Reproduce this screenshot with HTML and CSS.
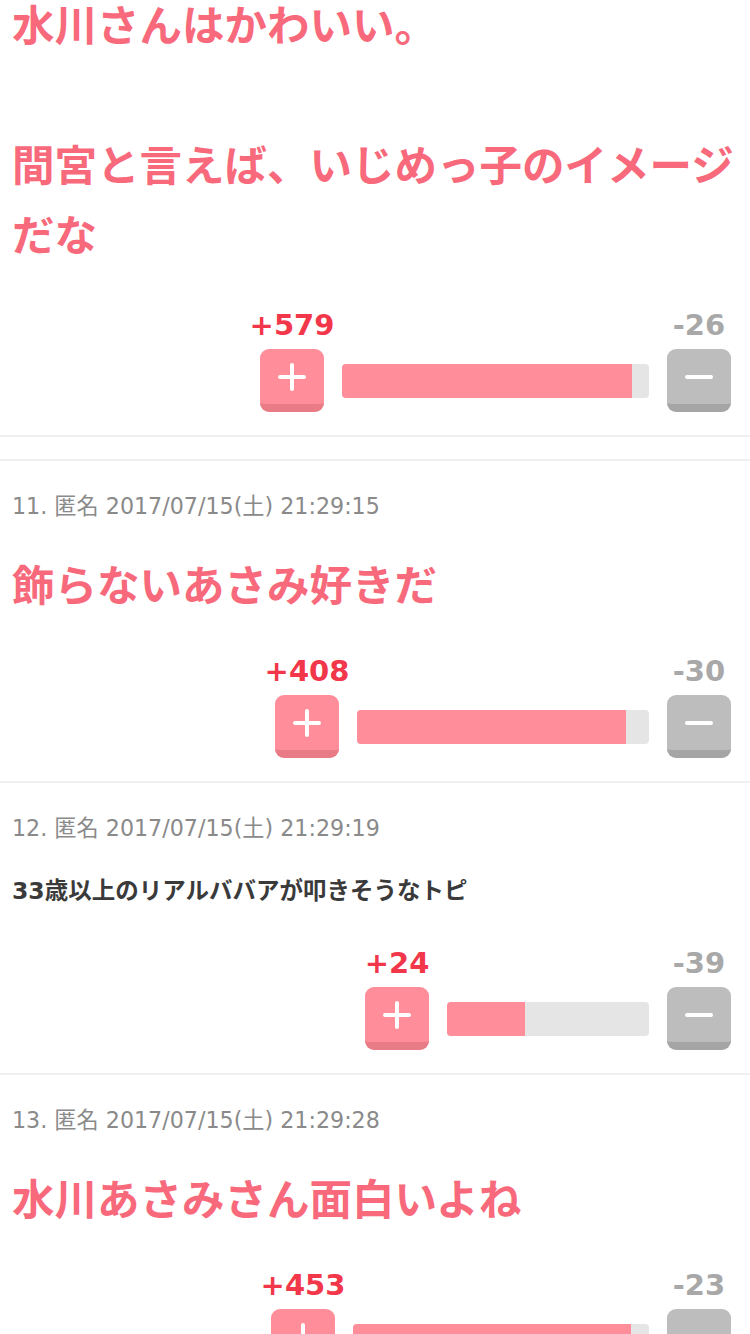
FILE: index.html
```html
<!DOCTYPE html>
<html lang="ja">
<head>
<meta charset="utf-8">
<title>comments</title>
<link rel="stylesheet" href="styles.css">
</head>
<body>
<div class="page">
  <section class="item item-first">
    <div class="comment big top">水川さんはかわいい。<br><br>間宮と言えば、いじめっ子のイメージだな</div>
    <div class="vote">
      <div class="vcol"><span class="count plus">+579</span><button class="btn btn-plus" aria-label="plus"><span class="hbar"></span><span class="vbar"></span></button></div>
      <div class="bar" style="width:307px"><div class="fill" style="width:94.5%"></div></div>
      <div class="vcol"><span class="count minus">-26</span><button class="btn btn-minus" aria-label="minus"><span class="hbar"></span></button></div>
    </div>
  </section>
  <div class="spacer"></div>
  <section class="item">
    <div class="meta">11. 匿名 2017/07/15(土) 21:29:15</div>
    <div class="comment big">飾らないあさみ好きだ</div>
    <div class="vote">
      <div class="vcol"><span class="count plus">+408</span><button class="btn btn-plus" aria-label="plus"><span class="hbar"></span><span class="vbar"></span></button></div>
      <div class="bar" style="width:292px"><div class="fill" style="width:92%"></div></div>
      <div class="vcol"><span class="count minus">-30</span><button class="btn btn-minus" aria-label="minus"><span class="hbar"></span></button></div>
    </div>
  </section>
  <section class="item">
    <div class="meta">12. 匿名 2017/07/15(土) 21:29:19</div>
    <div class="comment small">33歳以上のリアルババアが叩きそうなトピ</div>
    <div class="vote">
      <div class="vcol"><span class="count plus">+24</span><button class="btn btn-plus" aria-label="plus"><span class="hbar"></span><span class="vbar"></span></button></div>
      <div class="bar" style="width:202px"><div class="fill" style="width:38.5%"></div></div>
      <div class="vcol"><span class="count minus">-39</span><button class="btn btn-minus" aria-label="minus"><span class="hbar"></span></button></div>
    </div>
  </section>
  <section class="item">
    <div class="meta">13. 匿名 2017/07/15(土) 21:29:28</div>
    <div class="comment big">水川あさみさん面白いよね</div>
    <div class="vote">
      <div class="vcol"><span class="count plus">+453</span><button class="btn btn-plus" aria-label="plus"><span class="hbar"></span><span class="vbar"></span></button></div>
      <div class="bar" style="width:296px"><div class="fill" style="width:94%"></div></div>
      <div class="vcol"><span class="count minus">-23</span><button class="btn btn-minus" aria-label="minus"><span class="hbar"></span></button></div>
    </div>
  </section>
</div>
</body>
</html>
```
FILE: styles.css
```css
html, body {
  margin: 0;
  padding: 0;
  background: #ffffff;
}
body {
  font-family: "DejaVu Sans", "Noto Sans CJK JP", sans-serif;
  overflow: hidden;
}
.page {
  width: 750px;
}
.item {
  border-bottom: 2px solid #f0f0f0;
  padding: 0 0 23px 0;
}
.spacer {
  height: 22px;
  border-bottom: 2px solid #f0f0f0;
}
.meta {
  margin: 30px 12px 0 12px;
  font-size: 22.2px;
  line-height: 30px;
  color: #8a8a8a;
  white-space: nowrap;
}
.comment {
  margin: 27px 12px 0 12px;
}
.comment.big {
  font-family: "Noto Sans CJK JP", sans-serif;
  font-size: 42.5px;
  line-height: 70px;
  font-weight: 700;
  color: #f7697b;
}
.comment.top {
  margin-top: -12px;
}
.item-first .vote {
  margin-top: 40px;
}
.comment.small {
  margin-top: 29px;
  font-family: "DejaVu Sans", "Noto Sans CJK JP", sans-serif;
  font-size: 23.5px;
  line-height: 38px;
  font-weight: 700;
  color: #3a3a3a;
  white-space: nowrap;
}
.vote {
  margin-top: 36px;
  display: flex;
  justify-content: flex-end;
  align-items: flex-end;
  gap: 18px;
  padding-right: 19px;
}
.vcol {
  width: 64px;
  display: flex;
  flex-direction: column;
  align-items: center;
}
.count {
  font-family: "DejaVu Sans", sans-serif;
  font-weight: 700;
  font-size: 29px;
  line-height: 34px;
  margin-bottom: 7px;
  white-space: nowrap;
}
.count.plus { color: #f2374b; }
.count.minus { color: #a8a8a8; }
.btn {
  position: relative;
  width: 64px;
  height: 63px;
  box-sizing: border-box;
  border: none;
  border-radius: 9px;
  padding: 0;
  margin: 0;
  display: block;
}
.btn-plus {
  background: #ff8e9a;
  border-bottom: 8px solid #e97b87;
}
.btn-minus {
  background: #bdbdbd;
  border-bottom: 8px solid #a5a5a5;
}
.hbar {
  position: absolute;
  left: 18px;
  top: 26px;
  width: 28px;
  height: 4px;
  border-radius: 2px;
  background: #ffffff;
}
.vbar {
  position: absolute;
  left: 30px;
  top: 14px;
  width: 4px;
  height: 28px;
  border-radius: 2px;
  background: #ffffff;
}
.bar {
  height: 34px;
  margin-bottom: 14px;
  border-radius: 4px;
  background: #e5e5e5;
  overflow: hidden;
  flex: none;
}
.fill {
  height: 100%;
  background: #ff8e9a;
}
```
